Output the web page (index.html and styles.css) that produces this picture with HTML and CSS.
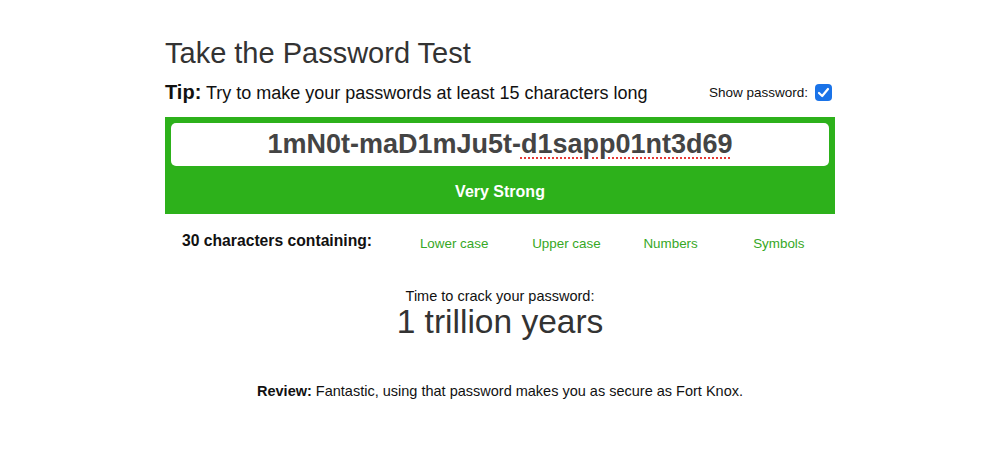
FILE: index.html
```html
<!DOCTYPE html>
<html>
<head>
<meta charset="utf-8">
<link rel="stylesheet" href="styles.css">
</head>
<body>
<div class="wrap">
  <h1 class="title">Take the Password Test</h1>
  <div class="tipbar">
    <div class="tip"><b>Tip:</b> Try to make your passwords at least 15 characters long</div>
    <label class="show">Show password:
      <span class="check"><svg width="17" height="17" viewBox="0 0 17 17"><rect width="17" height="17" rx="4" fill="#1a73e8"/><path d="M4 9 L7.2 12 L13 5" stroke="#fff" stroke-width="2.2" fill="none" stroke-linecap="round" stroke-linejoin="round"/></svg></span>
    </label>
  </div>
  <div class="meter">
    <div class="field"><span>1mN0t-maD1mJu5t-</span><span class="spell">d1sapp01nt3d69</span></div>
    <div class="strength">Very Strong</div>
  </div>
  <div class="contains">
    <div class="count">30 characters containing:</div>
    <div class="kind">Lower case</div>
    <div class="kind">Upper case</div>
    <div class="kind">Numbers</div>
    <div class="kind">Symbols</div>
  </div>
  <div class="crack">
    <div class="crack-label">Time to crack your password:</div>
    <div class="crack-time">1 trillion years</div>
  </div>
  <div class="review"><b>Review:</b> Fantastic, using that password makes you as secure as Fort Knox.</div>
</div>
</body>
</html>
```
FILE: styles.css
```css
html, body { margin: 0; padding: 0; background: #fff; }
body { font-family: "Liberation Sans", Arial, sans-serif; color: #222; }
.wrap { width: 670px; margin: 0 auto; padding-top: 36px; }
.title { font-size: 29px; font-weight: normal; color: #333; margin: 0; line-height: 35px; }
.tipbar { display: flex; justify-content: space-between; align-items: center; margin-top: 6px; height: 30px; }
.tip { font-size: 18px; color: #111; }
.tip b { font-size: 20px; }
.show { font-size: 13.5px; color: #111; display: flex; align-items: center; gap: 7px; padding-right: 3px; }
.check { display: flex; }
.meter { background: #2db11b; margin-top: 10px; padding: 6px 6px 0; height: 91px; }
.field { background: #fff; border-radius: 5px; height: 43px; display: flex; justify-content: center; align-items: center; font-size: 27px; font-weight: bold; color: #444; }
.spell { text-decoration: underline dotted #e53935; text-decoration-thickness: 2px; text-underline-offset: 4px; }
.strength { color: #fff; font-weight: bold; font-size: 16px; text-align: center; margin-top: 17px; }
.contains { display: flex; align-items: center; margin-top: 17px; height: 20px; padding-right: 4px; }
.count { font-size: 15.7px; font-weight: bold; color: #111; padding-left: 17px; width: 220px; }
.kind { flex: 1; text-align: center; font-size: 13.4px; color: #36a825; padding-top: 4px; }
.kind:nth-child(2) { padding-right: 4px; }
.kind:nth-child(3) { padding-left: 4px; }
.kind:nth-child(4) { padding-right: 4px; }
.crack { text-align: center; margin-top: 37px; }
.crack-label { font-size: 14.5px; color: #111; }
.crack-time { font-size: 33.5px; color: #333; line-height: 36px; }
.review { text-align: center; font-size: 14.5px; color: #111; margin-top: 43px; }
```
